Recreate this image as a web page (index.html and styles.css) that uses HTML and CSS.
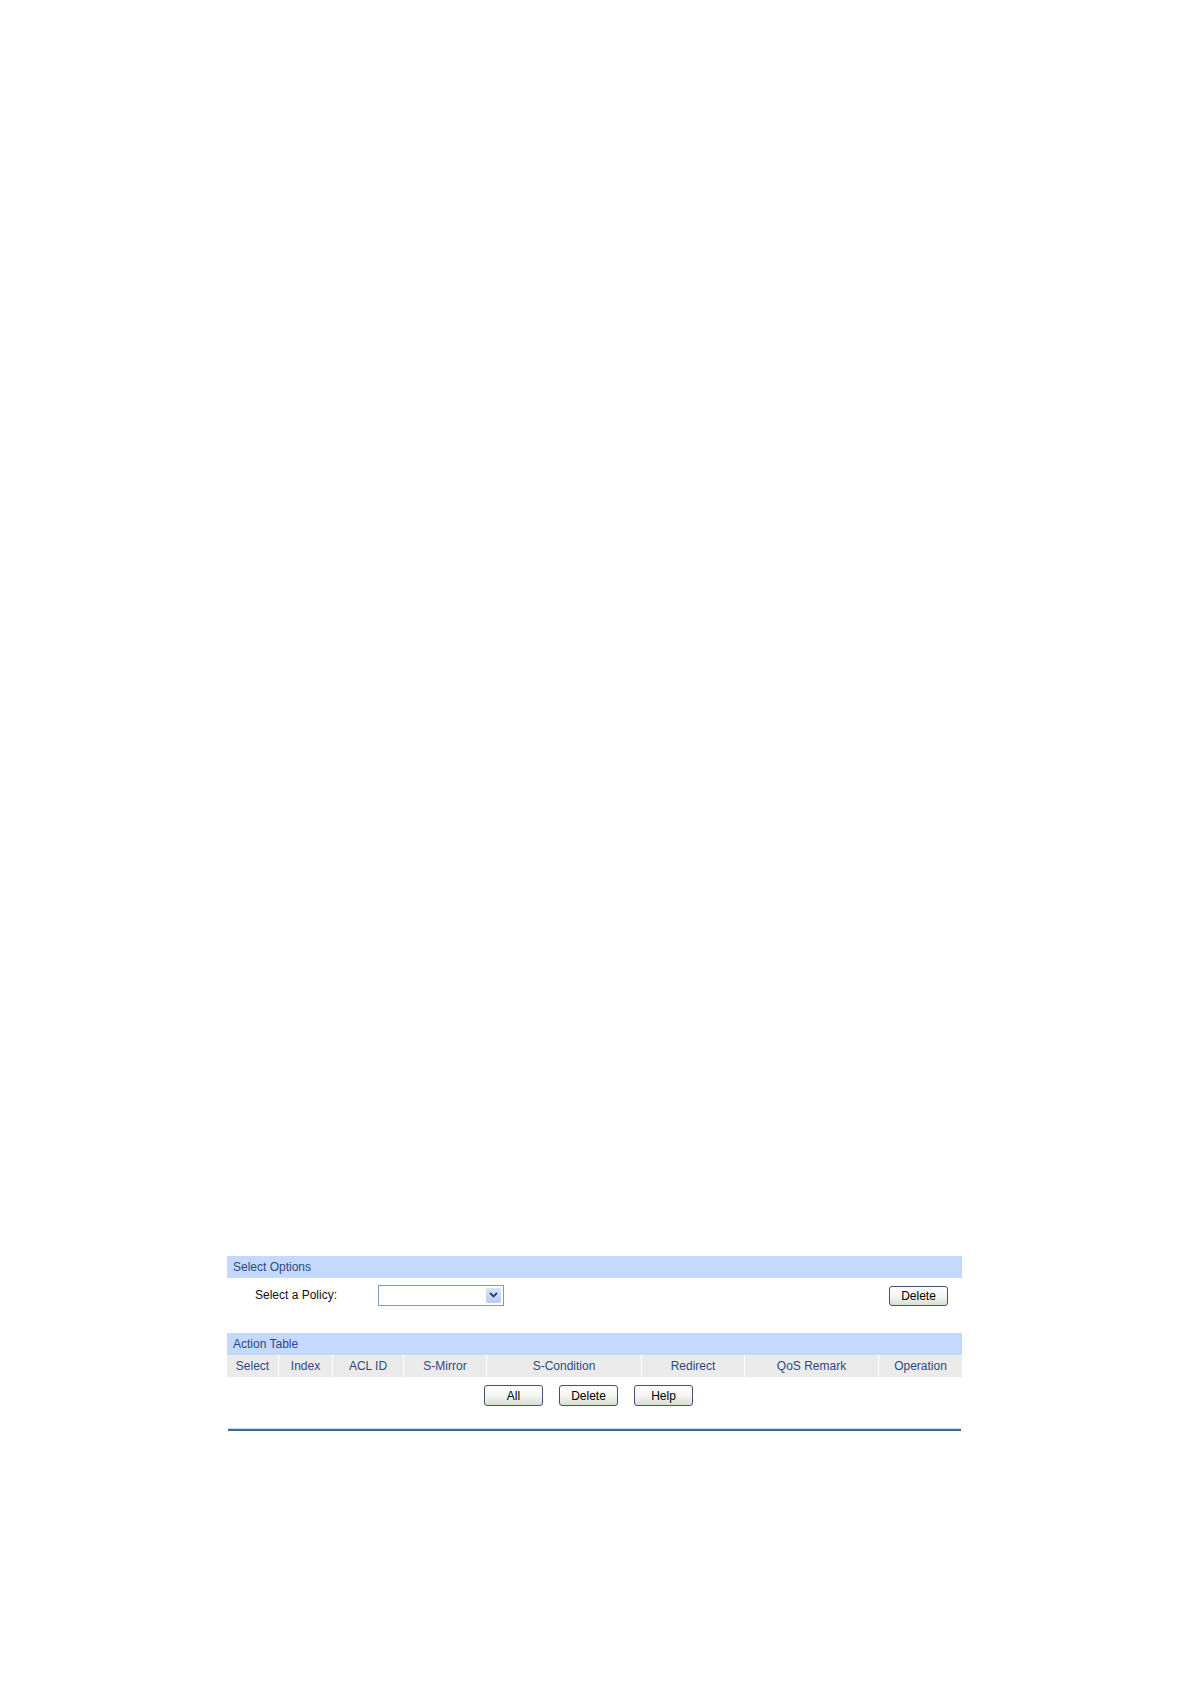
FILE: index.html
```html
<!DOCTYPE html>
<html>
<head>
<meta charset="utf-8">
<link rel="stylesheet" href="styles.css">
</head>
<body>
<div class="page">
  <div class="panel">
    <div class="bar">Select Options</div>
    <div class="policy-row">
      <span class="label">Select a Policy:</span>
      <div class="select"><span class="arrow"><svg width="9" height="6" viewBox="0 0 9 6"><path d="M1 1 L4.5 4.5 L8 1" fill="none" stroke="#2d3f66" stroke-width="1.8"/></svg></span></div>
      <span class="spacer"></span>
      <button class="btn">Delete</button>
    </div>
    <div class="bar bar2">Action Table</div>
    <div class="thead">
      <div class="th c1">Select</div>
      <div class="th c2">Index</div>
      <div class="th c3">ACL ID</div>
      <div class="th c4">S-Mirror</div>
      <div class="th c5">S-Condition</div>
      <div class="th c6">Redirect</div>
      <div class="th c7">QoS Remark</div>
      <div class="th c8">Operation</div>
    </div>
    <div class="actions">
      <button class="btn">All</button>
      <button class="btn">Delete</button>
      <button class="btn">Help</button>
    </div>
    <div class="rule"></div>
  </div>
</div>
</body>
</html>
```
FILE: styles.css
```css
html, body {
  margin: 0;
  padding: 0;
  background: #ffffff;
}
.page {
  padding-top: 1256px;
  padding-left: 227px;
  font-family: "Liberation Sans", Arial, sans-serif;
  font-size: 12px;
}
.panel {
  width: 735px;
}
.bar {
  height: 22px;
  line-height: 22px;
  background: #c5d8fd;
  color: #2e4a7d;
  padding-left: 6px;
  font-size: 12px;
}
.policy-row {
  display: flex;
  align-items: center;
  height: 34px;
  padding-left: 28px;
  padding-right: 14px;
  padding-top: 0;
}
.label {
  color: #111;
  width: 123px;
}
.select {
  box-sizing: border-box;
  width: 126px;
  height: 21px;
  border: 1px solid #7f9db9;
  background: #fff;
  display: flex;
  justify-content: flex-end;
  align-items: center;
  padding-right: 2px;
}
.arrow {
  width: 15px;
  height: 15px;
  background: linear-gradient(#d6e3fb, #b8cdf5);
  border-radius: 2px;
  display: flex;
  align-items: center;
  justify-content: center;
}
.spacer {
  flex: 1;
}
.btn {
  box-sizing: border-box;
  width: 59px;
  height: 20px;
  padding: 0;
  margin: 0;
  font-family: "Liberation Sans", Arial, sans-serif;
  font-size: 12px;
  color: #000;
  border: 1px solid #42546e;
  border-radius: 3px;
  background: linear-gradient(#ffffff 0%, #f3f3f0 55%, #dcdcd6 100%);
  line-height: 18px;
}
.policy-row .btn {
  margin-top: 2px;
}
.bar2 {
  margin-top: 21px;
}
.thead {
  display: grid;
  grid-template-columns: 51px 54px 71px 83px 155px 103px 134px 84px;
  height: 22px;
  background: #ebebeb;
}
.th {
  line-height: 22px;
  text-align: center;
  color: #2e4a7d;
  border-left: 1px solid #ffffff;
}
.th.c1 {
  border-left: none;
}
.actions {
  display: flex;
  justify-content: center;
  gap: 16px;
  padding-top: 8px;
  padding-right: 12px;
  height: 21px;
}
.actions .btn {
  height: 21px;
}
.rule {
  margin-top: 22px;
  margin-left: 1px;
  width: 733px;
  height: 2px;
  background: #3f6b93;
  border-top: 1px solid #bfe3f7;
}
```
